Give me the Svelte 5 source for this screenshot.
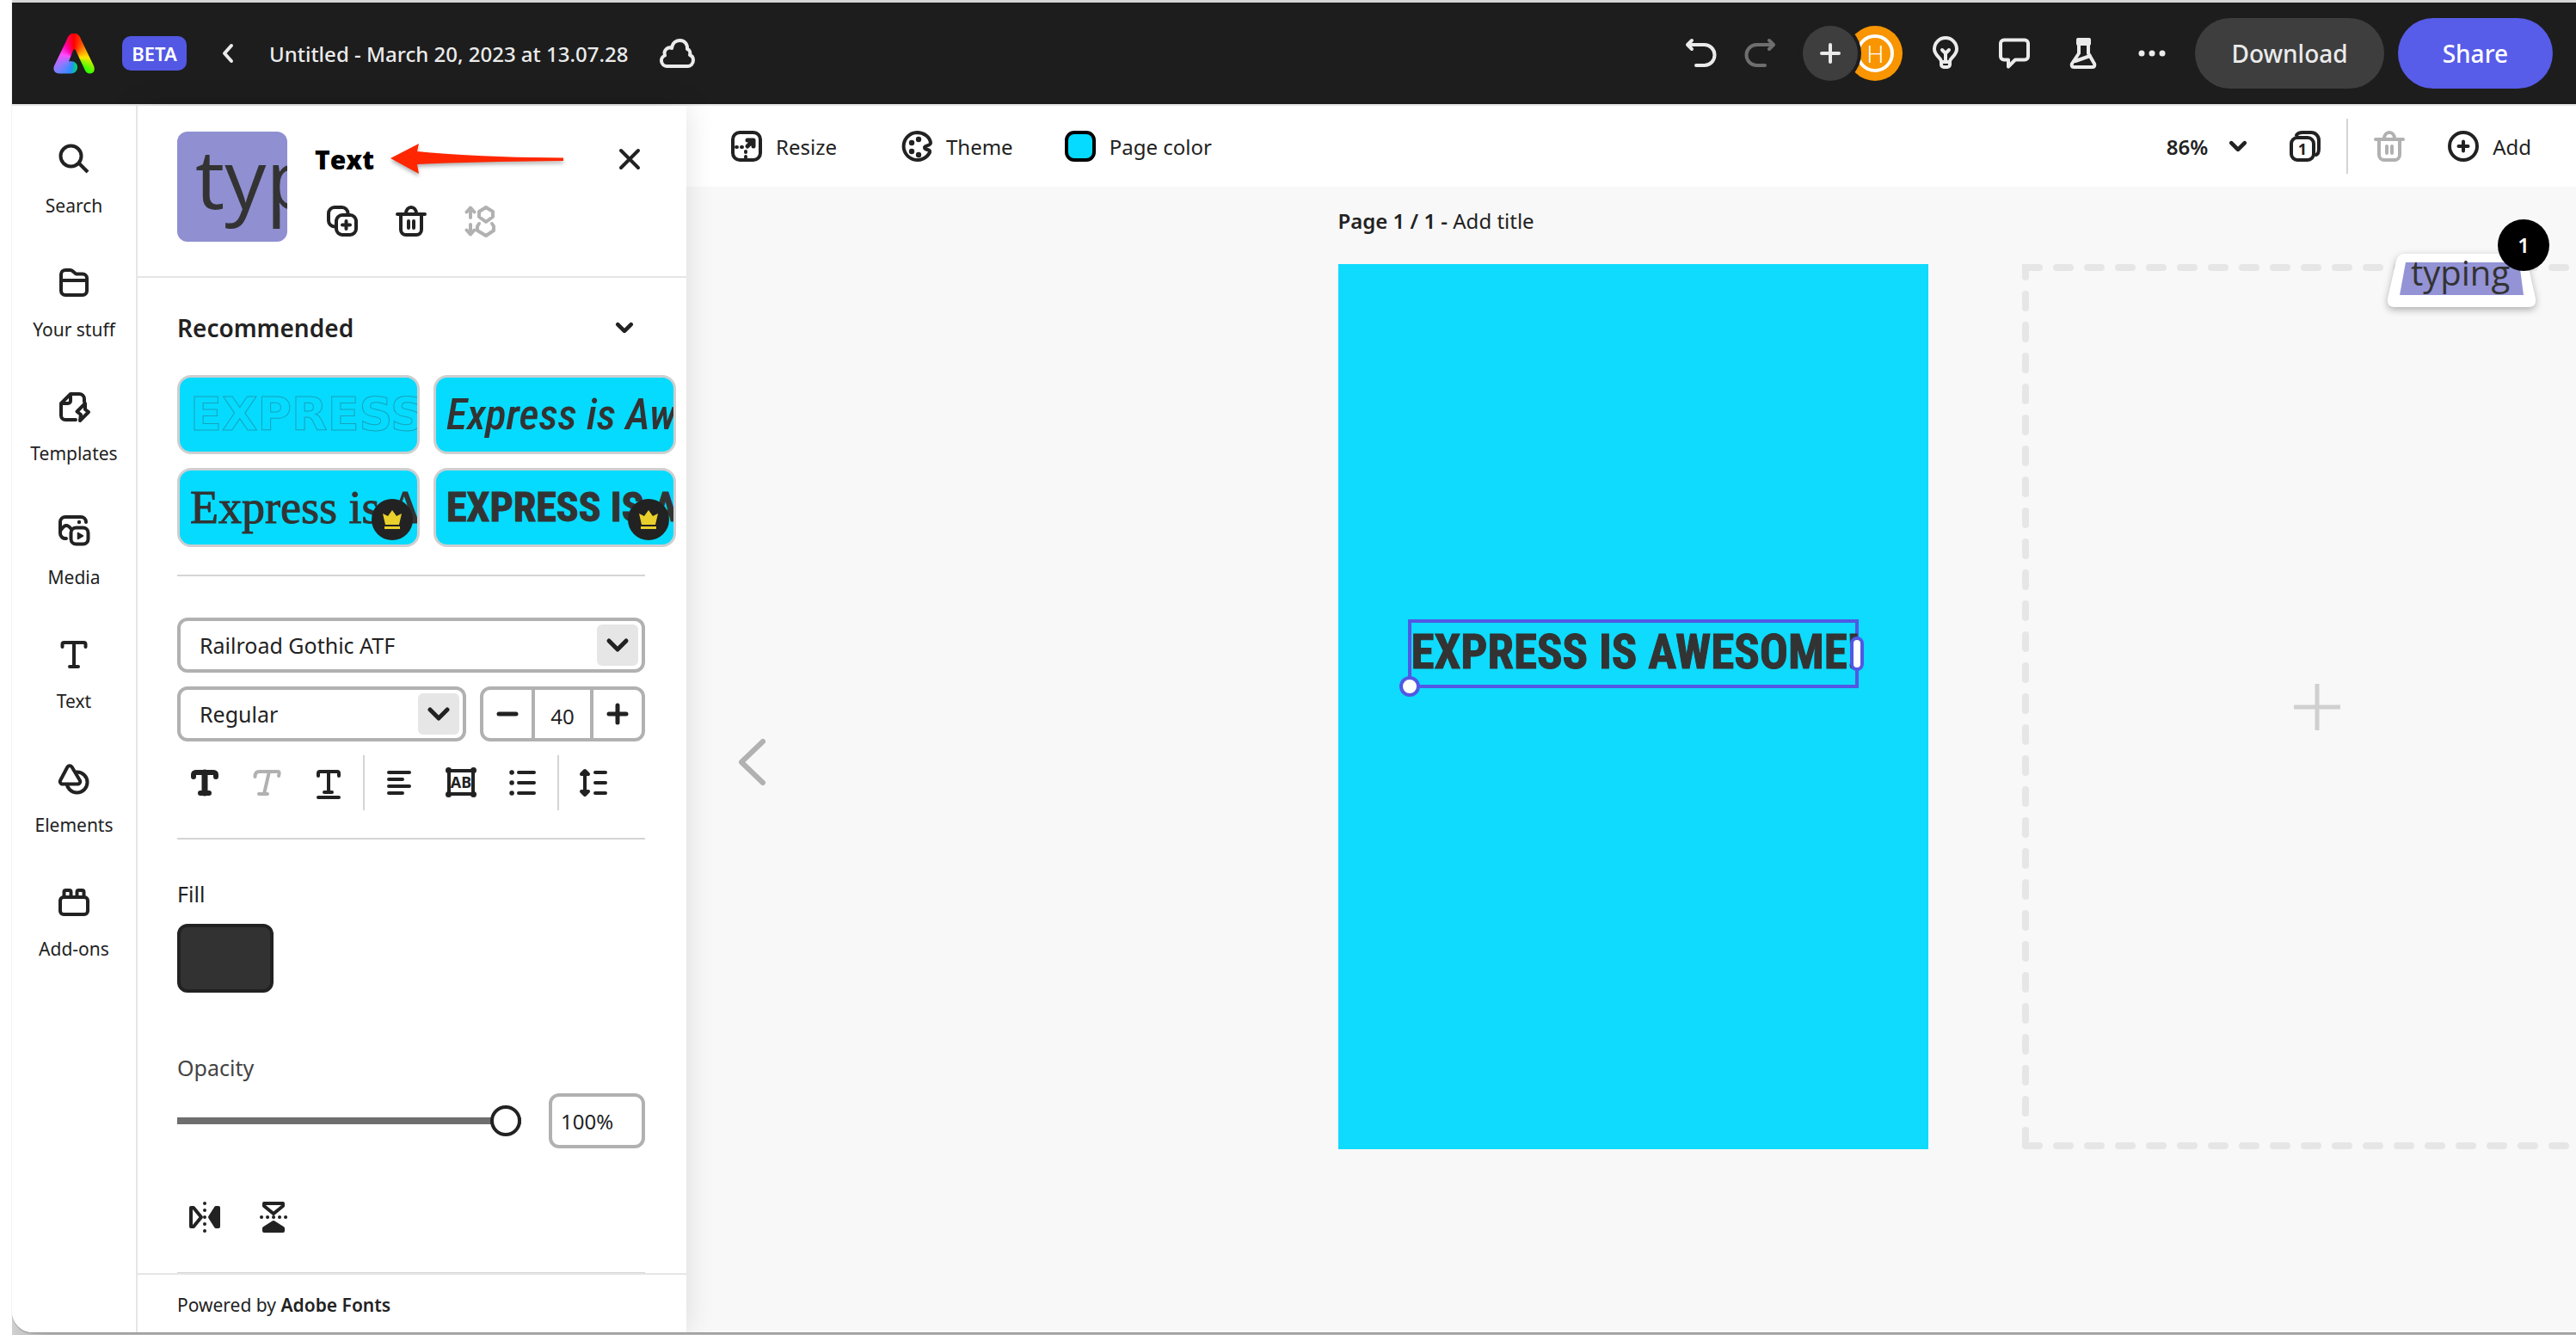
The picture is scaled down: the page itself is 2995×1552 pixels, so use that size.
<script>
  const icons = {
    undo: '<path d="M7 3L2 8l5 5M3 8h18.500a12 12 0 0 1 0 24H12" />',
    redo: '<path d="M29 3l5 5-5 5M33 8H14.500a12 12 0 0 0 0 24H24" />',
    bulb: '<path d="M13 27c-1-4-8-7-8-14a13 13 0 0 1 26 0c0 7-7 10-8 14v4a3 3 0 0 1-3 3h-4a3 3 0 0 1-3-3zM13 28h10M18 27V17M14 14l4 4 4-4" />',
    comment: '<path d="M6 2.500h24a4 4 0 0 1 4 4v15a4 4 0 0 1-4 4H19L11 33.500v-8H6a4 4 0 0 1-4-4v-15a4 4 0 0 1 4-4z" />',
    flask: '<path d="M13 6v12L5 30c-1 2 0 4 2 4h22c2 0 3-2 2-4l-7-12V6M9 27l17-6" /><rect x="12" y="2" width="13" height="5" fill="currentColor" />',
    dots: '<g fill="currentColor" stroke="none"><circle cx="6" cy="18" r="3.500"/><circle cx="18" cy="18" r="3.500"/><circle cx="30" cy="18" r="3.500"/></g>',
    cloud: '<path d="M9 33a6.500 6.500 0 0 1-2-12.500C5 14 11 10 15 12 16 5 21 3 24.500 3c6 0 9 5 8.500 10 3 1 4 4 3 7 3 1 4 3.500 4 6 0 4-3 7-6 7z" />',
    back: '<path d="M23 9l-8 9 8 9" />',
    search: '<circle cx="14.500" cy="14.500" r="12"/><path d="M24 23l10 10" stroke-linecap="butt"/>',
    folder: '<path d="M3 8a5 5 0 0 1 5-5h6c3 0 4 4 7 4.500h7a5 5 0 0 1 5 5V27a5 5 0 0 1-5 5H8a5 5 0 0 1-5-5zM3 15h30" />',
    templates: '<path d="M20 33H8a5 5 0 0 1-5-5V14L14 3h10a6 6 0 0 1 6 6v3M3 14h8a3 3 0 0 0 3-3V3" /><path d="M31 14L21.500 23.500 26 27l-1 7L35 24l-4-3z" />',
    media: '<path d="M9 27a6 6 0 0 1-7-6V8a6 6 0 0 1 6-6h18a6 6 0 0 1 6 6M2 18c5-7 8-8 12-3" /><rect x="14.500" y="14.500" width="20" height="19" rx="6"/><g fill="currentColor"><path d="M22.500 20.500v7l6-3.500z" stroke-width="1.500"/><circle cx="24" cy="8" r="2.200" stroke="none"/></g>',
    text: '<path d="M4.500 9V6a2 2 0 0 1 2-2h23a2 2 0 0 1 2 2v3M13 32h10"/><path d="M18 4v28" stroke-width="4"/>',
    elements: '<circle cx="21.500" cy="22.500" r="12"/><path d="M10.500 4.500a3 3 0 0 1 5 0l9.500 16a3 3 0 0 1-2 4H4a3 3 0 0 1-2-4z" fill="#fff" />',
    addons: '<path d="M6.500 11V6a2 2 0 0 1 2-2h4a2 2 0 0 1 2 2v5M21.500 11V6a2 2 0 0 1 2-2h4a2 2 0 0 1 2 2v5"/><rect x="2" y="12" width="32" height="20" rx="4" stroke-width="4"/>',
    duplicate: '<path d="M9 24.500a7 7 0 0 1-7-7V9a7 7 0 0 1 7-7h8.500a7 7 0 0 1 7 7"/><rect x="11" y="11" width="23" height="23" rx="7"/><path d="M22.500 18v9M18 22.500h9"/>',
    trash: '<path d="M2 10h32M12 9.500c0-10 12-10 12 0M6 10v18a6 6 0 0 0 6 6h12a6 6 0 0 0 6-6V10M15 18v8M21 18v8"/>',
    arrange: '<path d="M7 3v11M2.500 7.500L7 2.500l4.500 5M7 22v11M2.500 28.500L7 33.500l4.500-5"/><path d="M25 2l8 5v6l-8 6-8-6V7zM17 21l-2 3v5l10 6 9-6v-5l-2-3"/>',
    close: '<path d="M8 8l20 20M28 8L8 28"/>',
    chevron: '<path d="M8 13l10 10 10-10" />',
    minus: '<path d="M8 18h20" />',
    plus: '<path d="M8 18h20M18 8v20" />',
    resize: '<rect x="2" y="2" width="32" height="32" rx="8"/><path d="M19 11h7v7M25 12l-6 6" stroke-width="5"/><path d="M6 19h1M12 19h1M17 24v1M17 30v1"/>',
    theme: '<path d="M34 14C33 7 26 2 18 2a16 16 0 1 0 15 23c1-4-5-2-6-5s7-2 7-6z"/><g fill="currentColor" stroke="none"><circle cx="12" cy="14" r="3.200"/><circle cx="20" cy="10" r="3.200"/><circle cx="12" cy="24" r="3.200"/><circle cx="20" cy="28" r="3.200"/></g>',
    pages: '<rect x="2" y="8" width="26" height="26" rx="7"/><path d="M8 5c2-3 4-3 7-3h10a9 9 0 0 1 9 9v10c0 3-1 6-3 7"/><text x="15" y="28" class="glyph">1</text>',
    add: '<circle cx="18" cy="18" r="16"/><path d="M18 12.500v11M12.500 18h11"/>',
    bold: '<path d="M5 11V8.500A2.500 2.500 0 0 1 7.500 6h21A2.500 2.500 0 0 1 31 8.500V11M13 30h10" stroke-width="6"/><path d="M18 6v24" stroke-width="7"/>',
    italic: '<path d="M4.500 11c0-4 2-6 5-6H31c2 0 2 2 1 5M9 31h10M21 5l-6 26"/>',
    underline: '<path d="M6 10V7a2 2 0 0 1 2-2h20a2 2 0 0 1 2 2v3M13 29h9M6 35h24"/><path d="M18 5v23" stroke-width="4"/>',
    align: '<path d="M6 6h24M6 14h16M6 22h24M6 30h16"/>',
    box: '<rect x="4" y="4" width="28" height="27"/><g fill="currentColor" stroke="none"><circle cx="3.500" cy="3.500" r="3.500"/><circle cx="32.500" cy="3.500" r="3.500"/><circle cx="3.500" cy="31.500" r="3.500"/><circle cx="32.500" cy="31.500" r="3.500"/></g><text x="18" y="24" class="glyph">AB</text>',
    list: '<path d="M13 6h18M13 18h18M13 30h18"/><path d="M5 6h.1M5 18h.1M5 30h.1" stroke-width="5.500"/>',
    spacing: '<path d="M8 5v26M20 6h12M20 18h12M20 30h12"/><path d="M4 8l4-4 4 4zM4 28l4 4 4-4z" fill="currentColor"/>',
    flipH: '<path d="M2 7v22h3l9-11L5 7z"/><path d="M34 7v22h-3l-7-11 7-11z" fill="currentColor"/><path d="M18 2v.1M18 10v.1M18 18v.1M18 26v.1M18 34v.1"/>',
    flipV: '<path d="M7 2h22v3l-11 9L7 5z"/><path d="M7 34h22v-3l-11-7-11 7z" fill="currentColor"/><path d="M4 18h.1M11 18h.1M18 18h.1M25 18h.1M32 18h.1"/>',
  };

  const rail = [
    ['search', 'Search'],
    ['folder', 'Your stuff'],
    ['templates', 'Templates'],
    ['media', 'Media'],
    ['text', 'Text'],
    ['elements', 'Elements'],
    ['addons', 'Add-ons'],
  ];

  const samples = [
    { kind: 'outline', text: 'EXPRESS IS AWESOME!', premium: false },
    { kind: 'slanted', text: 'Express is Awesome!', premium: false },
    { kind: 'antique', text: 'Express is Awesome!', premium: true },
    { kind: 'gothic', text: 'EXPRESS IS AWESOME!', premium: true },
  ];

  let opacity = $state(100);
  let size = $state(40);
</script>

{#snippet icon(name)}
  <svg class="icon" viewBox="0 0 36 36" aria-hidden="true">{@html icons[name]}</svg>
{/snippet}

<div class="backdrop">
<div class="window">
  <header>
    <a href="#home" class="logo" aria-label="Home"></a>
    <span class="beta">BETA</span>
    <button class="back" aria-label="Back">{@render icon('back')}</button>
    <span class="title">Untitled - March 20, 2023 at 13.07.28</span>
    <svg class="cloud" viewBox="0 0 42 36" aria-hidden="true">{@html icons.cloud}</svg>
    <div class="actions">
      <button aria-label="Undo">{@render icon('undo')}</button>
      <button class="dim" aria-label="Redo">{@render icon('redo')}</button>
      <div class="people">
        <button class="invite" aria-label="Invite">{@render icon('plus')}</button>
        <button class="avatar" aria-label="Account"><span>H</span></button>
      </div>
      <div class="tools">
        <button aria-label="Tips">{@render icon('bulb')}</button>
        <button aria-label="Comments">{@render icon('comment')}</button>
        <button aria-label="Labs">{@render icon('flask')}</button>
        <button aria-label="More">{@render icon('dots')}</button>
      </div>
      <div class="pills">
        <button class="pill">Download</button>
        <button class="pill share">Share</button>
      </div>
    </div>
  </header>

  <div class="body">
    <nav>
      {#each rail as [name, label]}
        <button class="rail-item">{@render icon(name)}<span>{label}</span></button>
      {/each}
    </nav>

    <aside>
      <div class="head">
        <div class="thumb">typing</div>
        <div class="head-main">
          <div class="head-row">
            <h2>Text</h2>
            <svg class="arrow" viewBox="0 0 204 38" aria-hidden="true">
              <path d="M1 18L34 1l-2 9c60 6 118 7 170 7.500v3.500c-52 1-110 1-170 4l2 11z" />
            </svg>
            <button class="close" aria-label="Close">{@render icon('close')}</button>
          </div>
          <div class="head-icons">
            <button aria-label="Duplicate">{@render icon('duplicate')}</button>
            <button aria-label="Delete">{@render icon('trash')}</button>
            <button class="off" aria-label="Arrange">{@render icon('arrange')}</button>
          </div>
        </div>
      </div>

      <div class="props">
        <button class="section-title">Recommended {@render icon('chevron')}</button>
        <div class="samples">
          {#each samples as s}
            <button class="sample">
              <span class={s.kind}>{s.text}</span>
              {#if s.premium}
                <svg class="crown" viewBox="0 0 48 48" aria-hidden="true">
                  <circle cx="24" cy="24" r="24" />
                  <path d="M13 17l6 3 5-7 5 7 6-3-3 13H16zM15 32h18v3H15z" />
                </svg>
              {/if}
            </button>
          {/each}
        </div>
        <hr />

        <div class="row first">
          <label class="select">
            <select aria-label="Font"><option>Railroad Gothic ATF</option></select>
            <span>{@render icon('chevron')}</span>
          </label>
        </div>
        <div class="row">
          <label class="select">
            <select aria-label="Font style"><option>Regular</option></select>
            <span>{@render icon('chevron')}</span>
          </label>
          <div class="stepper">
            <button aria-label="Decrease size" onclick={() => size--}>{@render icon('minus')}</button>
            <input aria-label="Font size" bind:value={size} />
            <button aria-label="Increase size" onclick={() => size++}>{@render icon('plus')}</button>
          </div>
        </div>
        <div class="format">
          <div>
            <button aria-label="Bold">{@render icon('bold')}</button>
            <button class="off" aria-label="Italic">{@render icon('italic')}</button>
            <button aria-label="Underline">{@render icon('underline')}</button>
          </div>
          <div>
            <button aria-label="Alignment">{@render icon('align')}</button>
            <button aria-label="Text layout">{@render icon('box')}</button>
            <button aria-label="List">{@render icon('list')}</button>
          </div>
          <div>
            <button aria-label="Spacing">{@render icon('spacing')}</button>
          </div>
        </div>
        <hr />

        <div class="label fill-label">Fill</div>
        <button class="fill" aria-label="Fill color"></button>

        <label class="label opacity-label" for="opacity">Opacity</label>
        <div class="opacity">
          <input id="opacity" type="range" min="0" max="100" bind:value={opacity} />
          <input class="percent" aria-label="Opacity value" value="{opacity}%" />
        </div>

        <div class="flip">
          <button aria-label="Flip horizontal">{@render icon('flipH')}</button>
          <button aria-label="Flip vertical">{@render icon('flipV')}</button>
        </div>
        <hr class="last" />
      </div>
      <footer>Powered by <a href="#fonts">Adobe Fonts</a></footer>
    </aside>

    <main>
      <div class="toolbar">
        <button class="resize">{@render icon('resize')}Resize</button>
        <button>{@render icon('theme')}Theme</button>
        <button><i class="swatch"></i>Page color</button>
        <div class="right">
          <button class="zoom">86% {@render icon('chevron')}</button>
          <button class="pages" aria-label="Pages">{@render icon('pages')}</button>
          <span class="rule"></span>
          <button class="off" aria-label="Delete page">{@render icon('trash')}</button>
          <button class="add">{@render icon('add')}Add</button>
        </div>
      </div>
      <div class="canvas">
        <button class="prev" aria-label="Previous page">
          <svg viewBox="0 0 32 54" aria-hidden="true"><path d="M29 3L4 27l25 24" /></svg>
        </button>
        <section class="page-wrap">
          <div class="page-title"><b>Page 1 / 1 -</b> Add title</div>
          <div class="page">
            <div class="selected">
              EXPRESS IS AWESOME!
              <i class="knob"></i>
              <i class="grip"></i>
            </div>
          </div>
        </section>
        <button class="ghost" aria-label="Add page">
          <svg class="dashes" aria-hidden="true">
            <path d="M0 0h8v8H0z" />
            <line x1="4" y1="4" x2="100%" y2="4" />
            <line x1="4" y1="4" x2="4" y2="100%" stroke-dashoffset="5" />
            <svg y="100%" overflow="visible"><line x1="4" y1="-4" x2="100%" y2="-4" /></svg>
          </svg>
          <svg class="cross" viewBox="0 0 56 56" aria-hidden="true"><path d="M28 1v54M1 28h54" /></svg>
        </button>
        <div class="drag">
          <svg viewBox="0 0 180 76" aria-hidden="true">
            <path class="card" d="M24 7h132q8 0 10 8l10 44q1 10-8 10H12q-9 0-8-10L14 15q2-8 10-8z" />
            <path class="tile" d="M25 17h132l5 38H18z" />
            <text x="31" y="44">typing</text>
          </svg>
          <span class="count">1</span>
        </div>
      </div>
    </main>
  </div>
</div>
</div>

<style>
  :global(body) {
    background: #fff;
  }
  .backdrop {
    box-sizing: border-box;
    height: 100vh;
    margin-left: 14px;
    padding-bottom: 3px;
    background: linear-gradient(90deg, #d0d0d0, #b4b4b4 40px);
  }
  .window {
    box-sizing: border-box;
    height: 100%;
    display: flex;
    flex-direction: column;
    border-top: 3px solid #d6d6d6;
    border-bottom-left-radius: 24px;
    background: #fff;
    box-shadow: 0 1px 1px #888;
    overflow: hidden;
    font-family: 'Noto Sans', 'Open Sans', sans-serif;
    font-size: 24px;
    color: #222;
  }
  button {
    font: inherit;
    color: inherit;
    background: none;
    border: 0;
    padding: 0;
    display: flex;
    align-items: center;
    cursor: pointer;
  }
  svg {
    fill: none;
    stroke: currentColor;
    stroke-width: 4;
    stroke-linecap: round;
    stroke-linejoin: round;
    display: block;
    flex: none;
    overflow: visible;
  }
  .icon {
    width: 36px;
    height: 36px;
  }
  svg :global(.glyph) {
    font-size: 18px;
    font-weight: 700;
    text-anchor: middle;
    fill: currentColor;
    stroke: none;
  }
  .off {
    color: #b1b1b1;
  }

  header {
    flex: none;
    height: 118px;
    display: flex;
    align-items: center;
    padding: 0 27px 0 48px;
    background: #1d1d1d;
    border-bottom: 2px solid #e6e6e6;
    color: #ebebeb;
  }
  .logo {
    width: 48px;
    height: 47px;
    background: conic-gradient(from 0deg at 24px 28px, #f00, #ff9000 50deg, #ffe600 90deg, #3f0 135deg, #0c8 170deg, #2a8cff 195deg, #8a7bff 238deg, #ff4dff 285deg, #f0a 325deg, #f00);
    clip-path: path('M24 0c4 0 7 3 8.500 8L47 38c2 5 0 9-4.500 9-3 0-5-2-6-4.500L26 20c-1-2-2-2-3 0l-5 13c3-1 10 0 10 6.500 0 4.500-3 7.500-8 7.500H7c-5 0-8-4-6-9L15.500 8C17 3 20 0 24 0z');
  }
  .beta {
    margin-left: 32px;
    width: 75px;
    line-height: 40px;
    border-radius: 10px;
    background: #5258e4;
    color: #fff;
    font-size: 22px;
    font-weight: 600;
    text-align: center;
  }
  .back {
    margin: 0 31px 0 29px;
  }
  .title {
    font-weight: 500;
    white-space: nowrap;
  }
  .cloud {
    width: 42px;
    height: 36px;
    margin-left: 36px;
  }
  .actions {
    margin-left: auto;
    display: flex;
    align-items: center;
    gap: 32px;
  }
  .dim {
    color: #6e6e6e;
  }
  .people {
    display: flex;
  }
  .invite,
  .avatar {
    width: 64px;
    height: 64px;
    border-radius: 50%;
    justify-content: center;
  }
  .invite {
    z-index: 1;
    background: #3e3e3e;
    box-shadow: 0 0 0 4px #1d1d1d;
  }
  .avatar {
    margin-left: -12px;
    background: #f89500;
    color: #fff;
  }
  .avatar span {
    width: 36px;
    border: 4px solid #fff;
    border-radius: 50%;
    font-size: 28px;
    font-weight: 300;
    line-height: 36px;
    text-align: center;
  }
  .tools {
    display: flex;
    gap: 44px;
  }
  .pills {
    display: flex;
    gap: 16px;
  }
  .pill {
    height: 82px;
    padding: 0 42px;
    border-radius: 41px;
    background: #3e3e3e;
    font-size: 28px;
    font-weight: 500;
  }
  .share {
    padding: 0 52px;
    background: #575ce9;
    color: #fff;
  }

  .body {
    flex: 1;
    min-height: 0;
    display: flex;
  }
  nav {
    flex: none;
    position: relative;
    z-index: 2;
    width: 144px;
    padding-top: 44px;
    border-right: 2px solid #e6e6e6;
    background: #fff;
  }
  .rail-item {
    width: 100%;
    height: 144px;
    flex-direction: column;
    gap: 20px;
    font-size: 21px;
    line-height: 32px;
  }

  aside {
    flex: none;
    width: 638px;
    display: flex;
    flex-direction: column;
    background: #fff;
    box-shadow: 0 0 32px rgba(0, 0, 0, 0.12);
    z-index: 1;
  }
  .head {
    flex: none;
    display: flex;
    gap: 32px;
    padding: 30px 48px 40px 46px;
    border-bottom: 2px solid #e6e6e6;
  }
  .thumb {
    box-sizing: border-box;
    width: 128px;
    height: 128px;
    padding-left: 21px;
    border-radius: 12px;
    background: #8f8fd2;
    color: #333;
    font-family: 'Open Sans', sans-serif;
    font-size: 96px;
    line-height: 106px;
    overflow: hidden;
  }
  .head-main {
    flex: 1;
  }
  .head-row {
    display: flex;
    align-items: center;
    height: 64px;
  }
  h2 {
    margin: 0;
    font-family: 'Open Sans', sans-serif;
    font-size: 30px;
    font-weight: 800;
    color: #000;
  }
  .arrow {
    width: 204px;
    height: 38px;
    margin-left: 18px;
    fill: #ff2600;
    stroke: none;
    filter: drop-shadow(0 3px 2px rgba(0, 0, 0, 0.3));
  }
  .close {
    margin-left: auto;
  }
  .head-icons {
    display: flex;
    gap: 44px;
    padding: 22px 0 0 14px;
  }
  .props {
    flex: 1;
    min-height: 0;
    overflow: hidden;
    padding: 0 48px 0 46px;
    display: flex;
    flex-direction: column;
  }
  hr {
    flex: none;
    width: 100%;
    margin: 32px 0 0;
    border: 0;
    border-top: 2px solid #d4d4d4;
  }
  .section-title {
    justify-content: space-between;
    margin: 36px 10px 33px 0;
    font-size: 28px;
    font-weight: 600;
    line-height: 44px;
  }
  .section-title .icon,
  .zoom .icon {
    width: 28px;
    height: 28px;
    stroke-width: 6;
  }
  .samples {
    display: grid;
    grid-template-columns: 282px 282px;
    gap: 16px;
  }
  .sample {
    box-sizing: border-box;
    position: relative;
    height: 92px;
    padding-left: 12px;
    border: 3px solid #cdcfd0;
    border-radius: 16px;
    background: #05dbfe;
    overflow: hidden;
    white-space: nowrap;
    color: #333;
  }
  .outline {
    font: 700 54px/80px 'DejaVu Sans', sans-serif;
    color: transparent;
    -webkit-text-stroke: 1px #17a3bd;
  }
  .slanted {
    font: italic 500 50px/80px 'Roboto Condensed', 'Noto Sans', sans-serif;
  }
  .antique {
    font: 400 54px/80px 'Liberation Serif', serif;
    -webkit-text-stroke: 1px #333;
  }
  .gothic {
    font: 700 48px/80px 'Roboto Condensed', 'Noto Sans', sans-serif;
    -webkit-text-stroke: 1px #333;
  }
  .crown {
    position: absolute;
    right: 5px;
    bottom: 5px;
    width: 48px;
    height: 48px;
    fill: #222;
    stroke: none;
  }
  .crown path {
    fill: #ead02b;
  }
  .row {
    display: flex;
    gap: 16px;
    margin-top: 16px;
  }
  .row.first {
    margin-top: 48px;
  }
  .select {
    flex: 1;
    position: relative;
    font-size: 25px;
  }
  .select select,
  .stepper,
  .percent {
    box-sizing: border-box;
    height: 64px;
    border: 4px solid #b1b1b1;
    border-radius: 12px;
    background: #fff;
    color: inherit;
    font: inherit;
  }
  .select select {
    width: 100%;
    padding: 0 60px 0 22px;
    appearance: none;
  }
  .select span {
    position: absolute;
    top: 8px;
    right: 8px;
    width: 48px;
    height: 48px;
    display: grid;
    place-items: center;
    border-radius: 6px;
    background: #e6e6e6;
    pointer-events: none;
  }
  .select .icon,
  .stepper .icon {
    stroke-width: 5;
  }
  .stepper {
    display: flex;
    width: 192px;
    overflow: hidden;
  }
  .stepper button {
    flex: 1;
    justify-content: center;
  }
  .stepper input {
    box-sizing: border-box;
    width: 72px;
    padding: 4px 0 0;
    border: solid #b1b1b1;
    border-width: 0 4px;
    font: inherit;
    color: inherit;
    text-align: center;
  }
  .format {
    display: flex;
    margin-top: 16px;
  }
  .format div {
    display: flex;
    align-items: center;
    gap: 36px;
    height: 64px;
    padding: 0 22px;
    border-left: 2px solid #d4d4d4;
  }
  .format div:first-child {
    padding: 0 22px 0 14px;
    border: 0;
  }
  .label {
    line-height: 32px;
    font-size: 25px;
  }
  .fill-label {
    margin-top: 47px;
  }
  .fill {
    flex: none;
    width: 112px;
    height: 80px;
    margin-top: 19px;
    border: 4px solid #222;
    border-radius: 12px;
    background: #323232;
  }
  .opacity-label {
    margin-top: 71px;
    color: #444;
  }
  .opacity {
    display: flex;
    align-items: center;
    gap: 32px;
    margin-top: 14px;
  }
  input[type='range'] {
    flex: 1;
    min-width: 0;
    height: 36px;
    margin: 0;
    appearance: none;
    background: linear-gradient(#6e6e6e, #6e6e6e) left center / 100% 8px no-repeat;
    border-radius: 4px;
  }
  input[type='range']::-webkit-slider-thumb {
    appearance: none;
    box-sizing: border-box;
    width: 36px;
    height: 36px;
    border: 4px solid #222;
    border-radius: 50%;
    background: #fff;
  }
  .percent {
    width: 112px;
    padding: 0 10px;
  }
  .flip {
    display: flex;
    gap: 44px;
    padding: 62px 0 0 14px;
  }
  .last {
    margin-top: 46px;
  }
  footer {
    flex: none;
    height: 67px;
    padding-left: 46px;
    border-top: 2px solid #e6e6e6;
    font-size: 21px;
    line-height: 70px;
  }
  footer a {
    color: inherit;
    font-weight: 600;
    text-decoration: none;
  }

  main {
    flex: 1;
    min-width: 0;
    display: flex;
    flex-direction: column;
  }
  .toolbar {
    flex: none;
    display: flex;
    align-items: center;
    gap: 60px;
    height: 94px;
    padding: 0 52px;
    background: #fff;
  }
  .toolbar button {
    gap: 16px;
  }
  .toolbar .resize {
    padding-right: 15px;
  }
  .swatch {
    box-sizing: border-box;
    width: 36px;
    height: 36px;
    border: 4px solid #000;
    border-radius: 11px;
    background: #05dbfe;
  }
  .right {
    margin-left: auto;
    display: flex;
    align-items: center;
  }
  .toolbar .zoom {
    gap: 21px;
    font-weight: 600;
  }
  .pages {
    margin: 0 30px 0 46px;
  }
  .rule {
    width: 2px;
    height: 64px;
    margin-right: 30px;
    background: #d4d4d4;
  }
  .add {
    margin-left: 50px;
  }
  .canvas {
    flex: 1;
    position: relative;
    overflow: hidden;
    background: #f8f8f8;
  }
  .prev {
    position: absolute;
    left: 60px;
    top: 642px;
    color: #b1b1b1;
  }
  .prev svg {
    width: 32px;
    height: 54px;
    stroke-width: 6;
  }
  .page-wrap {
    position: absolute;
    left: calc(50% - 341px);
    top: 20px;
    width: 686px;
  }
  .page-title {
    height: 70px;
    line-height: 40px;
  }
  .page-title b {
    font-weight: 600;
  }
  .page {
    position: relative;
    height: 1029px;
    background: #0edbfd;
  }
  .selected {
    box-sizing: border-box;
    position: absolute;
    left: 81px;
    top: 413px;
    width: 524px;
    height: 80px;
    border: 4px solid #5258e4;
    font: 700 55px/68px 'Roboto Condensed', 'Noto Sans', sans-serif;
    -webkit-text-stroke: 1px #333;
    color: #333;
    white-space: nowrap;
  }
  .knob,
  .grip {
    box-sizing: border-box;
    position: absolute;
    border: 4px solid #5258e4;
    border-radius: 12px;
    background: #fff;
  }
  .knob {
    left: -14px;
    bottom: -14px;
    width: 24px;
    height: 24px;
  }
  .grip {
    right: -10px;
    top: 16px;
    width: 16px;
    height: 40px;
  }
  .ghost {
    position: absolute;
    left: calc(50% + 454px);
    right: -42px;
    top: 90px;
    height: 1029px;
    justify-content: center;
    color: #d0d0d0;
  }
  .cross {
    width: 56px;
    height: 56px;
    stroke-width: 5;
    stroke-linecap: butt;
  }
  .dashes {
    position: absolute;
    inset: 0;
    width: 100%;
    height: 100%;
  }
  .dashes path {
    fill: #e6e6e6;
    stroke: none;
  }
  .dashes line {
    stroke: #e6e6e6;
    stroke-width: 8;
    stroke-dasharray: 16 20;
  }
  .drag {
    position: absolute;
    right: 43px;
    top: 71px;
  }
  .drag svg {
    width: 180px;
    height: 76px;
    stroke: none;
  }
  .card {
    fill: #fff;
    filter: drop-shadow(0 3px 4px rgba(0, 0, 0, 0.3));
  }
  .tile {
    fill: #9393d6;
  }
  .drag text {
    fill: #333;
    font-family: 'Open Sans', sans-serif;
    font-size: 40px;
  }
  .count {
    position: absolute;
    right: -12px;
    top: -33px;
    width: 60px;
    border-radius: 50%;
    background: #000;
    color: #fff;
    font-weight: 600;
    line-height: 60px;
    text-align: center;
  }
</style>
